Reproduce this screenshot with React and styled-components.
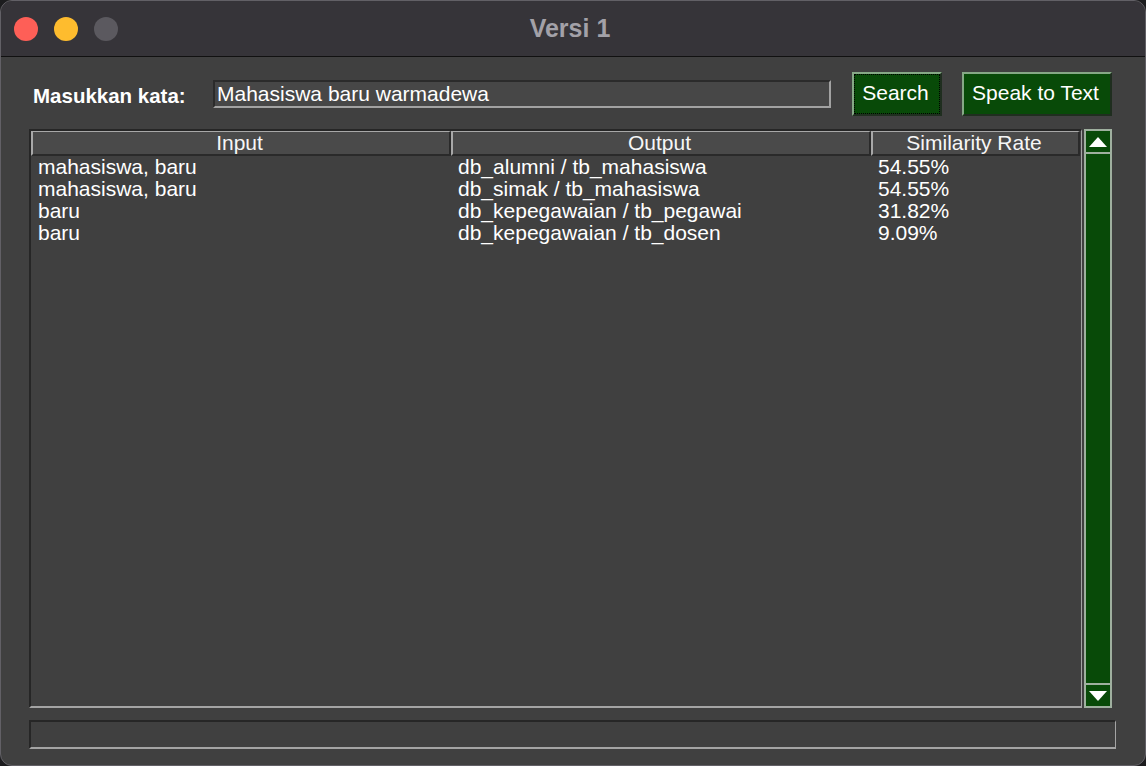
import styled, { createGlobalStyle } from "styled-components";

const GlobalStyle = createGlobalStyle`
  html, body {
    margin: 0;
    padding: 0;
    background: #1c1c1e;
  }
  body {
    font-family: "Liberation Sans", Arial, sans-serif;
  }
`;

const Window = styled.div`
  width: 1146px;
  height: 766px;
  box-sizing: border-box;
  border-radius: 12px;
  border: 1px solid #626066;
  overflow: hidden;
  display: flex;
  flex-direction: column;
  background: #404040;
`;

const TitleBar = styled.div`
  height: 55px;
  flex: none;
  background: #363439;
  border-bottom: 1px solid #111;
  display: flex;
  align-items: center;
  position: relative;
  padding-left: 13px;
  gap: 16px;
`;

const Light = styled.span`
  width: 24px;
  height: 24px;
  border-radius: 50%;
  background: ${({ color }) => color};
`;

const Title = styled.div`
  position: absolute;
  left: 0;
  right: 0;
  top: 0;
  bottom: 0;
  display: flex;
  align-items: center;
  justify-content: center;
  color: #a3a1a8;
  font-weight: bold;
  font-size: 25px;
  pointer-events: none;
  padding-right: 6px;
`;

const Content = styled.div`
  flex: 1;
  display: flex;
  flex-direction: column;
  padding: 15px 29px 16px 28px;
`;

const SearchRow = styled.div`
  display: flex;
  align-items: center;
  padding: 0 4px 0 4px;
  height: 44px;
`;

const Label = styled.label`
  color: #fff;
  font-weight: bold;
  font-size: 20.5px;
  width: 180px;
  margin-top: 3px;
  white-space: nowrap;
`;

const Entry = styled.input`
  box-sizing: border-box;
  width: 618px;
  height: 28px;
  background: #474747;
  border-style: solid;
  border-width: 2px;
  border-color: #2b2b2b #a2a2a2 #a2a2a2 #2b2b2b;
  color: #fff;
  font-family: "Liberation Sans", Arial, sans-serif;
  font-size: 21px;
  padding: 0 2px;
  margin-right: 21px;
  outline: none;
`;

const GreenButton = styled.button`
  box-sizing: border-box;
  width: ${({ w }) => w}px;
  height: 44px;
  background: #084a08;
  color: #fff;
  font-family: "Liberation Sans", Arial, sans-serif;
  font-size: 21px;
  border-style: solid;
  border-width: 2px;
  border-color: #86a886 #1f2e1f #1f2e1f #86a886;
  margin-right: ${({ mr }) => mr || 0}px;
  padding: 0 3px 3px 0;
  outline: ${({ focused }) => (focused ? "1px dotted #000" : "none")};
  outline-offset: -3px;
  cursor: pointer;
  white-space: nowrap;
`;

const TableArea = styled.div`
  margin-top: 13px;
  display: flex;
  gap: 2px;
  height: 579px;
  padding-right: 4px;
`;

const TableFrame = styled.div`
  flex: 1;
  box-sizing: border-box;
  border-style: solid;
  border-width: 2px 1px 2px 2px;
  border-color: #262626 #a4a4a4 #a4a4a4 #262626;
  display: flex;
  flex-direction: column;
  padding-right: 1px;
`;

const Grid = styled.div`
  display: grid;
  grid-template-columns: 420px 420px 1fr;
`;

const HeadCell = styled.div`
  box-sizing: border-box;
  height: 25px;
  background: #4a4a4a;
  border-style: solid;
  border-width: 1px 2px 2px 2px;
  border-color: #a8a8a8 #2a2a2a #2a2a2a #a8a8a8;
  color: #f6f6f6;
  font-size: 21px;
  text-align: center;
  line-height: 22px;
  white-space: nowrap;
  padding-right: 3px;
`;

const Cell = styled.div`
  height: 22px;
  line-height: 22px;
  color: #fff;
  font-size: 21px;
  padding-left: 7px;
  white-space: nowrap;
`;

const ScrollBar = styled.div`
  width: 28px;
  box-sizing: border-box;
  border: 2px solid #9fb09f;
  background: #084a08;
  display: flex;
  flex-direction: column;
  justify-content: space-between;
`;

const Arrow = styled.div`
  height: 21px;
  display: flex;
  align-items: center;
  justify-content: center;
  border-style: solid;
  border-color: #9fb09f;
  border-width: ${({ up }) => (up ? "0 0 2px 0" : "2px 0 0 0")};
`;

const StatusBar = styled.div`
  margin-top: 12px;
  height: 29px;
  box-sizing: border-box;
  border-style: solid;
  border-width: 2px 1px 2px 2px;
  border-color: #262626 #a4a4a4 #a4a4a4 #262626;
`;

const rows = [
  ["mahasiswa, baru", "db_alumni / tb_mahasiswa", "54.55%"],
  ["mahasiswa, baru", "db_simak / tb_mahasiswa", "54.55%"],
  ["baru", "db_kepegawaian / tb_pegawai", "31.82%"],
  ["baru", "db_kepegawaian / tb_dosen", "9.09%"],
];

const Tri = ({ up }) => (
  <svg width="18" height="10" viewBox="0 0 18 10">
    <polygon points={up ? "9,0 18,10 0,10" : "0,0 18,0 9,10"} fill="#fff" />
  </svg>
);

export default function App() {
  return (
    <>
      <GlobalStyle />
      <Window>
        <TitleBar>
          <Light color="#fe5f57" />
          <Light color="#febc2e" />
          <Light color="#5b595f" />
          <Title>Versi 1</Title>
        </TitleBar>
        <Content>
          <SearchRow>
            <Label>Masukkan kata:</Label>
            <Entry defaultValue="Mahasiswa baru warmadewa" />
            <GreenButton w={90} mr={20} focused>
              Search
            </GreenButton>
            <GreenButton w={150}>Speak to Text</GreenButton>
          </SearchRow>
          <TableArea>
            <TableFrame>
              <Grid>
                <HeadCell>Input</HeadCell>
                <HeadCell>Output</HeadCell>
                <HeadCell>Similarity Rate</HeadCell>
                {rows.map((r, i) =>
                  r.map((c, j) => <Cell key={`${i}-${j}`}>{c}</Cell>)
                )}
              </Grid>
            </TableFrame>
            <ScrollBar>
              <Arrow up>
                <Tri up />
              </Arrow>
              <Arrow>
                <Tri />
              </Arrow>
            </ScrollBar>
          </TableArea>
          <StatusBar />
        </Content>
      </Window>
    </>
  );
}
